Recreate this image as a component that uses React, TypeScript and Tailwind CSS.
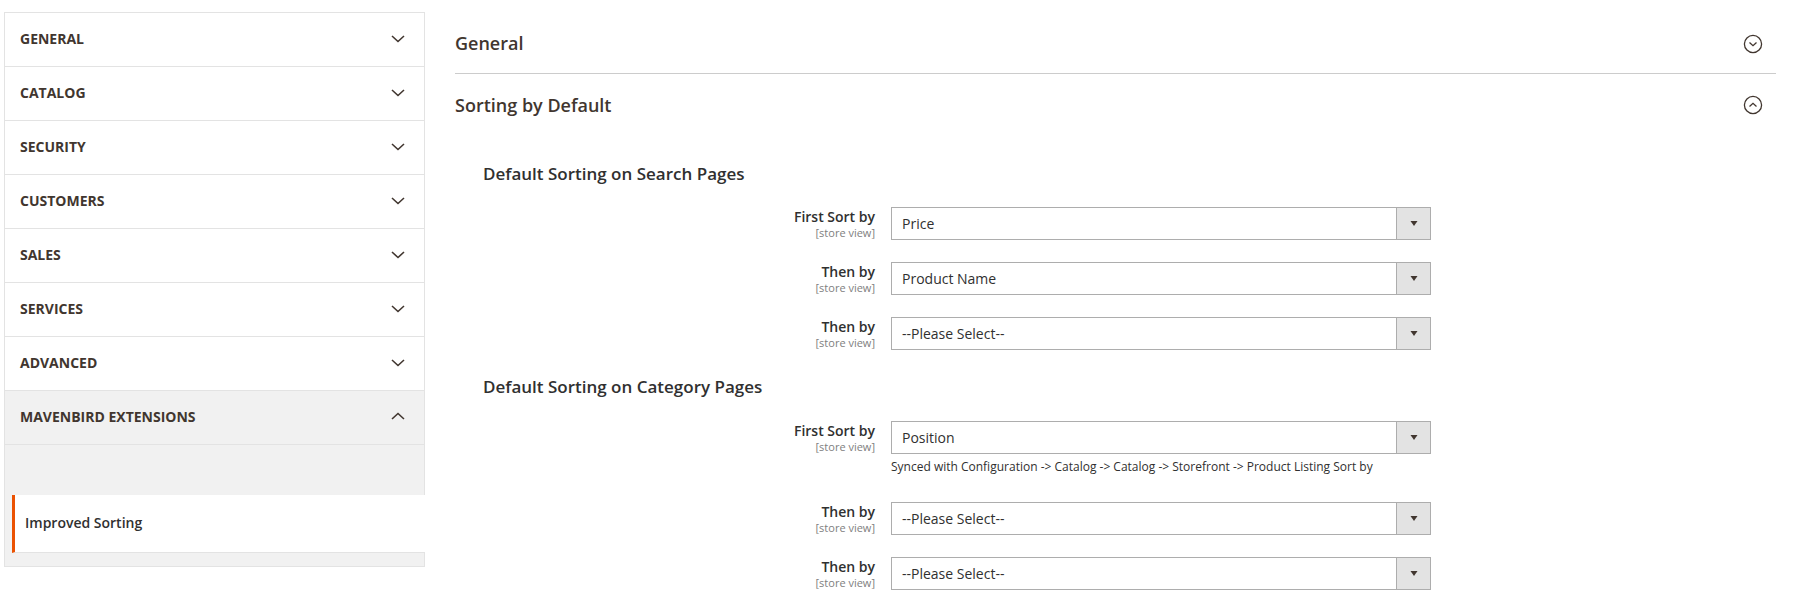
const navItems = ["General", "Catalog", "Security", "Customers", "Sales", "Services", "Advanced"];

const Chevron = ({ up = false }: { up?: boolean }) => (
  <svg width="14" height="8" viewBox="0 0 14 8" fill="none" className="shrink-0">
    <path
      d={up ? "M1 7L7 1.5L13 7" : "M1 1L7 6.5L13 1"}
      stroke="#41362f"
      strokeWidth="1.6"
    />
  </svg>
);

const CircleChevron = ({ up = false }: { up?: boolean }) => (
  <svg width="20" height="20" viewBox="0 0 20 20" fill="none" className="shrink-0">
    <circle cx="10" cy="10" r="8.6" stroke="#41362f" strokeWidth="1.3" />
    <path
      d={up ? "M6.5 11.5L10 8.3L13.5 11.5" : "M6.5 8.5L10 11.7L13.5 8.5"}
      stroke="#41362f"
      strokeWidth="1.3"
    />
  </svg>
);

const Sidebar = () => (
  <div className="self-start w-[421px] shrink-0 border-x border-t border-[#e3e3e3]">
    {navItems.map((item) => (
      <div
        key={item}
        className="h-[54px] flex items-center justify-between pl-[15px] pr-[19px] pb-[2px] border-b border-[#e3e3e3] bg-white"
      >
        <span className="text-[14px] font-bold uppercase text-[#41362f]">{item}</span>
        <Chevron />
      </div>
    ))}
    <div className="h-[54px] flex items-center justify-between pl-[15px] pr-[19px] pb-[3px] border-b border-[#e3e3e3] bg-[#f1f1f1]">
      <span className="text-[14px] font-bold uppercase text-[#41362f]">Mavenbird Extensions</span>
      <Chevron up />
    </div>
    <div className="bg-[#f1f1f1] border-b border-[#e3e3e3]">
      <div className="h-[50px]" />
      <div className="ml-[7px] -mr-px h-[58px] flex items-center bg-white border-l-[3px] border-l-[#eb5202] border-b border-b-[#e3e3e3] pl-[10px] pb-[2px]">
        <span className="text-[14px] font-semibold text-[#303030]">Improved Sorting</span>
      </div>
      <div className="h-[13px]" />
    </div>
  </div>
);

interface ISelectRowProps {
  label: string;
  value: string;
  note?: string;
}

const SelectRow = ({ label, value, note }: ISelectRowProps) => (
  <div className="flex gap-4">
    <div className="w-[420px] shrink-0 text-right pt-[1px]">
      <div className="text-[14px] leading-[18px] font-semibold text-[#303030]">{label}</div>
      <div className="text-[11px] leading-[13px] text-[#808080]">[store view]</div>
    </div>
    <div className="w-[540px]">
      <div className="h-[33px] flex border border-[#adadad] bg-white">
        <div className="flex-1 flex items-center pl-[10px] text-[14px] text-[#303030]">{value}</div>
        <div className="w-[34px] flex items-center justify-center bg-[#e3e3e3] border-l border-[#adadad]">
          <svg width="8" height="5" viewBox="0 0 8 5">
            <path d="M0.5 0H7.5L4 5Z" fill="#41362f" />
          </svg>
        </div>
      </div>
      {note && (
        <div className="mt-[5px] mb-[5px] text-[12px] leading-[16px] text-[#303030]">{note}</div>
      )}
    </div>
  </div>
);

export default function App() {
  return (
    <div className="min-h-[610px] bg-white flex pt-[12px] pl-[4px] pr-[21px] font-['Open_Sans',sans-serif]">
      <Sidebar />
      <div className="flex-1 ml-[30px]">
        <div className="h-[62px] flex items-center justify-between border-b border-[#cccccc] pt-[2px] pr-[13px]">
          <span className="text-[18px] font-semibold text-[#41362f]">General</span>
          <CircleChevron />
        </div>
        <div className="h-[62px] flex items-center justify-between pr-[13px]">
          <span className="text-[18px] font-semibold text-[#41362f]">Sorting by Default</span>
          <CircleChevron up />
        </div>

        <div className="mt-[26px] pl-[28px] h-[24px] flex items-center text-[17px] font-semibold text-[#303030]">
          Default Sorting on Search Pages
        </div>
        <div className="mt-[21px] flex flex-col gap-[22px]">
          <SelectRow label="First Sort by" value="Price" />
          <SelectRow label="Then by" value="Product Name" />
          <SelectRow label="Then by" value="--Please Select--" />
        </div>

        <div className="mt-[25px] pl-[28px] h-[24px] flex items-center text-[17px] font-semibold text-[#303030]">
          Default Sorting on Category Pages
        </div>
        <div className="mt-[22px] flex flex-col gap-[22px]">
          <SelectRow
            label="First Sort by"
            value="Position"
            note="Synced with Configuration -> Catalog -> Catalog -> Storefront -> Product Listing Sort by"
          />
          <SelectRow label="Then by" value="--Please Select--" />
          <SelectRow label="Then by" value="--Please Select--" />
        </div>
      </div>
    </div>
  );
}
